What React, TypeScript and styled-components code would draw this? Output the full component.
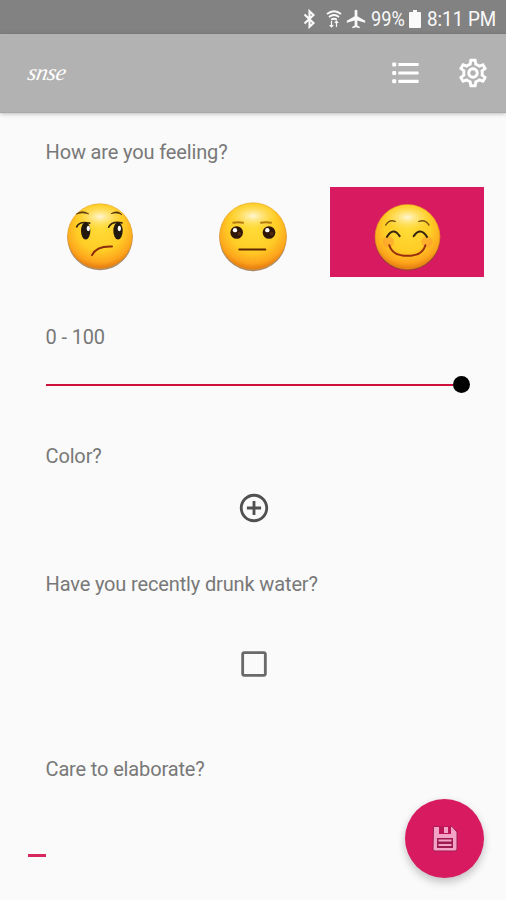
import React, { useState } from 'react';
import styled, { createGlobalStyle } from 'styled-components';
import { MdAddCircleOutline, MdAirplanemodeActive, MdCheckBoxOutlineBlank, MdOutlineSettings } from 'react-icons/md';

const Global = createGlobalStyle`
  * { box-sizing: border-box; }
  body { margin: 0; background: #fafafa; }
  button { border: 0; padding: 0; background: none; font: inherit; color: inherit; }
  svg { display: block; flex: none; }
`;

const Screen = styled.div`
  width: 506px;
  height: 900px;
  overflow: hidden;
  display: flex;
  flex-direction: column;
  position: relative;
  background: #fafafa;
  font-family: Roboto, sans-serif;
`;

const StatusBar = styled.header`
  height: 34px;
  flex: none;
  display: flex;
  align-items: center;
  justify-content: flex-end;
  padding: 3px 11px 0 0;
  background: #828282;
  color: #fafafa;
`;

const StatusText = styled.span<{ $width: number; $squeeze: number }>`
  width: ${(p) => p.$width}px;
  font-size: 20px;
  line-height: 24px;
  white-space: nowrap;
  transform: scaleX(${(p) => p.$squeeze});
  transform-origin: left center;
`;

const StatusIcon = styled.span<{ $gap: number }>`
  display: flex;
  margin-right: ${(p) => p.$gap}px;
`;

const AppBar = styled.nav`
  height: 79px;
  flex: none;
  display: flex;
  align-items: center;
  padding: 0 16px 0 28px;
  background: #b2b2b2;
  color: #fff;
  border-bottom: 1px solid #a9a9a9;
  box-shadow: 0 1px 4px rgba(0, 0, 0, 0.25);
`;

const Brand = styled.h1`
  margin: 0 auto 1px 0;
  font: italic 400 23px/28px 'Liberation Serif', serif;
  letter-spacing: -0.5px;
  transform: skewX(-10deg);
`;

const BarAction = styled.button`
  display: flex;
  & + & { margin-left: 37px; }
`;

const Form = styled.main`
  padding-top: 27px;
`;

const Question = styled.section<{ $height: number }>`
  height: ${(p) => p.$height}px;
`;

const Label = styled.h2`
  margin: 0 0 0 45.5px;
  font-size: 20px;
  font-weight: 400;
  line-height: 24px;
  letter-spacing: -0.14px;
  color: #787878;
`;

const Moods = styled.div`
  display: grid;
  grid-template-columns: repeat(3, 1fr);
  height: 90px;
  margin: 23px 22px 0 23px;
`;

const Mood = styled.button<{ $selected: boolean }>`
  display: flex;
  align-items: center;
  justify-content: center;
  padding-top: 9px;
  background: ${(p) => (p.$selected ? '#d81b60' : 'transparent')};
`;

const Slider = styled.div`
  display: flex;
  align-items: center;
  height: 17px;
  margin: 27px 36px 0 46px;
`;

const Track = styled.div`
  flex: 1;
  height: 2px;
  background: #d0103c;
`;

const Thumb = styled.div`
  width: 17px;
  height: 17px;
  border-radius: 50%;
  background: #000;
`;

const Centered = styled.div<{ $top: number }>`
  display: flex;
  justify-content: center;
  margin-top: ${(p) => p.$top}px;
  padding-left: 1px;
  color: #505050;
`;

const Cursor = styled.div`
  width: 18px;
  height: 3px;
  margin: 73px 0 0 28px;
  background: #d6285c;
`;

const SaveButton = styled.button`
  position: absolute;
  right: 22px;
  bottom: 22px;
  width: 79px;
  height: 79px;
  display: flex;
  align-items: center;
  justify-content: center;
  border-radius: 50%;
  background: #d81b60;
  box-shadow: 0 5px 8px rgba(0, 0, 0, 0.18), 0 1px 8px rgba(0, 0, 0, 0.06);
`;

function BluetoothIcon() {
  return (
    <svg width="13" height="20" viewBox="0 0 13 20" fill="none" stroke="#fafafa" strokeWidth="2.1">
      <path d="M1.5 5.5 10.5 14 6.5 17.8V2.2L10.5 6 1.5 14.5" />
    </svg>
  );
}

function WifiIcon() {
  return (
    <svg width="16" height="18" viewBox="0 0 16 18" fill="none" stroke="#fafafa" strokeWidth="1.9">
      <path d="M1 4Q8-1.5 15 4M3 7Q8 3 13 7M5.2 9.8Q8 7.6 10.8 9.8" />
      <path d="M5.5 11v6M3.7 15.2l1.8 1.8 1.8-1.8M10.5 17v-6M8.8 12.8l1.7-1.8 1.7 1.8" strokeWidth="1.2" />
    </svg>
  );
}

function BatteryIcon() {
  return (
    <svg width="12" height="18" viewBox="0 0 12 18" fill="#fafafa">
      <path d="M4 0h4v2h3q1 0 1 1v14q0 1-1 1H1q-1 0-1-1V3q0-1 1-1h3z" />
    </svg>
  );
}

function ListIcon() {
  return (
    <svg width="27" height="22" viewBox="0 0 27 22" fill="#fff">
      {[0.5, 9, 17.3].map((y) => (
        <g key={y}>
          <rect x="0.2" y={y} width="4" height="4" rx="1" />
          <rect x="6.4" y={y + 0.4} width="20.2" height="3.2" rx="0.7" />
        </g>
      ))}
    </svg>
  );
}

function SaveIcon() {
  return (
    <svg width="26" height="28" viewBox="0 0 26 28">
      <path d="M1.5 1.5H20L25 7v17q0 2-2 2H3q-2 0-2-2z" fill="#f2a3c6" stroke="#a51a50" strokeWidth="1" />
      <path d="M7 1h12v8H7z" fill="#bd1656" />
      <path d="M12 2h4v6h-4z" fill="#f2a3c6" />
      <path d="M5 13h16v10H5z" fill="#9c1c4e" />
      <path d="M6.5 15.5h13M6.5 20h13" stroke="#f2a3c6" strokeWidth="2.2" />
    </svg>
  );
}

interface FaceProps {
  id: string;
  viewBox: string;
  cx: number;
  cy: number;
  r: number;
  children: React.ReactNode;
}

function Face({ id, viewBox, cx, cy, r, children }: FaceProps) {
  return (
    <svg width="70" height="70" viewBox={viewBox} fill="none" strokeLinecap="round">
      <defs>
        <radialGradient id={id} cx="50%" cy="36%" r="66%">
          <stop offset="0" stopColor="#ffdc38" />
          <stop offset="0.55" stopColor="#ffcd26" />
          <stop offset="0.82" stopColor="#fda51c" />
          <stop offset="1" stopColor="#de6e0c" />
        </radialGradient>
        <radialGradient id={`${id}-shine`}>
          <stop offset="0" stopColor="#fff8df" stopOpacity="0.95" />
          <stop offset="1" stopColor="#ffe36a" stopOpacity="0" />
        </radialGradient>
      </defs>
      <circle cx={cx} cy={cy + 4} r={r} fill="#7c4c22" opacity="0.65" />
      <circle cx={cx} cy={cy} r={r - 0.8} fill={`url(#${id})`} stroke="#e39a20" strokeWidth="1.6" />
      <ellipse cx={cx} cy={cy - r * 0.6} rx={r * 0.72} ry={r * 0.38} fill={`url(#${id}-shine)`} />
      {children}
    </svg>
  );
}

function DoubtfulFace() {
  return (
    <Face id="doubtful" viewBox="45 49.5 210 210" cx={150} cy={152} r={98}>
      <path d="M80 85Q96 72 116 85Q97 79 80 85ZM184 84Q204 72 216 88Q204 79 184 84Z" fill="#52320d" stroke="#52320d" strokeWidth="2" />
      <path d="M80 124Q88 106 119 113M176 125Q185 106 216 112" stroke="#39250c" strokeWidth="5" />
      <ellipse cx="107" cy="136" rx="14" ry="26" fill="#21180e" />
      <ellipse cx="204" cy="136" rx="14" ry="26" fill="#21180e" />
      <ellipse cx="115" cy="129" rx="5" ry="8" fill="#fff" />
      <ellipse cx="208" cy="129" rx="5" ry="8" fill="#fff" />
      <path d="M126 209Q139 181 186 183" stroke="#8c2c0c" strokeWidth="6" />
    </Face>
  );
}

function NeutralFace() {
  return (
    <Face id="neutral" viewBox="40 49.5 210 210" cx={145} cy={152} r={101}>
      <path d="M86 112Q100 109 115 112M169 112Q184 109 199 112" stroke="#b47b10" strokeWidth="6" />
      <circle cx="96" cy="141" r="19" fill="#2e1608" />
      <circle cx="193" cy="141" r="19" fill="#2e1608" />
      <circle cx="104" cy="145" r="6" fill="#512810" />
      <circle cx="201" cy="145" r="6" fill="#512810" />
      <circle cx="91" cy="134" r="6.5" fill="#fff" />
      <circle cx="188" cy="134" r="6.5" fill="#fff" />
      <path d="M104 192H182" stroke="#5c2606" strokeWidth="6" />
    </Face>
  );
}

function HappyFace() {
  return (
    <Face id="happy" viewBox="141 64.5 210 210" cx={247.5} cy={169} r={98}>
      <circle cx="190" cy="184" r="17" fill="#ff9332" opacity="0.5" />
      <circle cx="306" cy="184" r="17" fill="#ff9332" opacity="0.5" />
      <path d="M182 134Q193 115 211 123M281 123Q301 115 312 134" stroke="#765010" strokeWidth="4" />
      <path d="M186 169Q205 138 224 167M266 167Q286 138 306 169" stroke="#352510" strokeWidth="6" />
      <path d="M193 194Q202 226 247 226Q293 226 301 194" stroke="#98300f" strokeWidth="6" />
    </Face>
  );
}

const moods = [DoubtfulFace, NeutralFace, HappyFace];

export default function App() {
  const [mood, setMood] = useState(2);
  return (
    <Screen>
      <Global />
      <StatusBar>
        <StatusIcon $gap={10}><BluetoothIcon /></StatusIcon>
        <StatusIcon $gap={3}><WifiIcon /></StatusIcon>
        <StatusIcon $gap={4}><MdAirplanemodeActive size={22} /></StatusIcon>
        <StatusText $width={38} $squeeze={0.91}>99%</StatusText>
        <StatusIcon $gap={6}><BatteryIcon /></StatusIcon>
        <StatusText $width={68} $squeeze={0.94}>8:11 PM</StatusText>
      </StatusBar>
      <AppBar>
        <Brand>snse</Brand>
        <BarAction aria-label="Entries"><ListIcon /></BarAction>
        <BarAction aria-label="Settings"><MdOutlineSettings size={34} /></BarAction>
      </AppBar>
      <Form>
        <Question $height={185}>
          <Label>How are you feeling?</Label>
          <Moods>
            {moods.map((Icon, i) => (
              <Mood key={i} $selected={mood === i} onClick={() => setMood(i)}><Icon /></Mood>
            ))}
          </Moods>
        </Question>
        <Question $height={119}>
          <Label>0 - 100</Label>
          <Slider><Track /><Thumb /></Slider>
        </Question>
        <Question $height={128}>
          <Label>Color?</Label>
          <Centered $top={23}><MdAddCircleOutline size={34} /></Centered>
        </Question>
        <Question $height={185}>
          <Label>Have you recently drunk water?</Label>
          <Centered $top={51}><MdCheckBoxOutlineBlank size={34} color="#6a6a6a" /></Centered>
        </Question>
        <Question $height={120}>
          <Label>Care to elaborate?</Label>
          <Cursor />
        </Question>
      </Form>
      <SaveButton aria-label="Save"><SaveIcon /></SaveButton>
    </Screen>
  );
}
